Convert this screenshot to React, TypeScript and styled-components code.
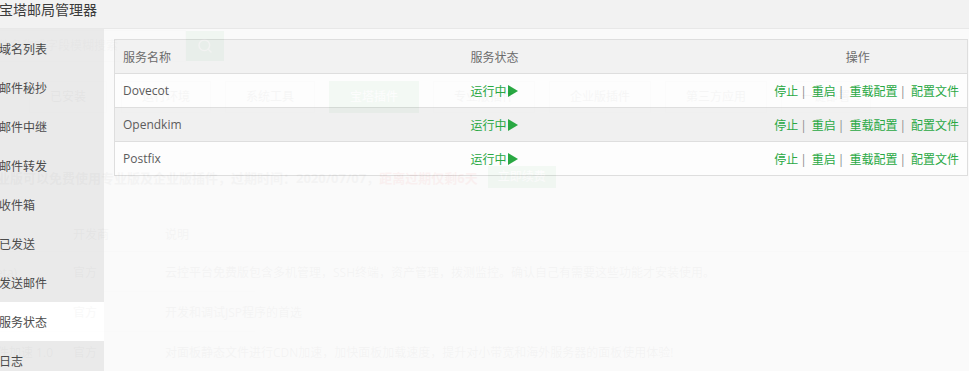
import React from "react";
import styled, { createGlobalStyle } from "styled-components";
import { Search } from "lucide-react";

const GlobalStyle = createGlobalStyle`
  html, body {
    margin: 0;
    padding: 0;
    background: #fff;
  }
  body {
    font-family: "Open Sans", "Noto Sans CJK SC", sans-serif;
    font-size: 12px;
    color: #555;
  }
`;

const Screen = styled.div`
  position: relative;
  width: 969px;
  height: 371px;
  overflow: hidden;
  background: #fff;
`;

/* ---------- page behind the layer ---------- */

const BgPage = styled.div`
  margin-left: -61px;
  padding-top: 30px;
  display: flex;
  flex-direction: column;
`;

const SearchRow = styled.div`
  display: flex;
  align-items: center;
  height: 32px;
`;

const SearchInput = styled.div`
  width: 235px;
  height: 30px;
  padding-left: 10px;
  border: 1px solid #ddd;
  line-height: 30px;
  color: #999;
  font-size: 12px;
`;

const SearchButton = styled.div`
  width: 38px;
  height: 30px;
  background: #20a53a;
  color: #fff;
  display: flex;
  align-items: center;
  justify-content: center;
`;

const TabRow = styled.div`
  display: flex;
  gap: 14px;
  margin-top: 19px;
  margin-left: 90px;
`;

const Tab = styled.div<{ $active?: boolean }>`
  height: 30px;
  line-height: 30px;
  padding: 0 20px;
  border: 1px solid ${(p) => (p.$active ? "#20a53a" : "#e4e4e4")};
  background: ${(p) => (p.$active ? "#20a53a" : "#fff")};
  color: ${(p) => (p.$active ? "#fff" : "#555")};
  font-size: 12px;
`;

const Notice = styled.div`
  margin-top: 52px;
  margin-left: 45px;
  height: 24px;
  display: flex;
  align-items: center;
  font-size: 13px;
  font-weight: bold;
  color: #666;
  white-space: nowrap;
`;

const NoticeRed = styled.span`
  color: #ef0808;
`;

const RenewButton = styled.span`
  margin-left: 10px;
  height: 22px;
  line-height: 22px;
  padding: 0 10px;
  background: #20a53a;
  color: #fff;
  font-size: 12px;
  font-weight: normal;
`;

const PluginTable = styled.table`
  margin-top: 28px;
  margin-left: -12px;
  width: 1100px;
  border-collapse: collapse;
  font-size: 12px;
  color: #666;
  th {
    text-align: left;
    font-weight: normal;
    height: 34px;
    padding: 0 10px;
    border-bottom: 1px solid #ddd;
  }
  td {
    height: 39px;
    padding: 0 10px;
    border-bottom: 1px solid #eee;
    white-space: nowrap;
  }
`;

/* ---------- the mail manager layer ---------- */

const Layer = styled.div`
  position: absolute;
  top: -12px;
  left: -21px;
  width: 999px;
  height: 400px;
  display: flex;
  flex-direction: column;
  opacity: 0.955;
  background: #fafafa;
`;

const LayerTitle = styled.div`
  height: 40px;
  line-height: 43px;
  padding-left: 20px;
  background: #f2f2f2;
  border-bottom: 1px solid #e8e8e8;
  font-size: 14px;
  color: #333;
`;

const LayerBody = styled.div`
  flex: 1;
  display: flex;
`;

const Menu = styled.ul`
  width: 125px;
  margin: 0;
  padding: 0;
  list-style: none;
  background: #eaeaea;
`;

const MenuItem = styled.li<{ $active?: boolean }>`
  height: 39px;
  line-height: 41px;
  padding-left: 20px;
  font-size: 12px;
  color: #444;
  background: ${(p) => (p.$active ? "#fff" : "transparent")};
`;

const Content = styled.div`
  flex: 1;
  padding: 10px;
`;

const ServiceTable = styled.table`
  width: 100%;
  border-collapse: collapse;
  border: 1px solid #ddd;
  font-size: 12px;
  color: #555;
  th {
    height: 33px;
    padding: 0 8px;
    background: #f2f2f2;
    font-weight: normal;
    color: #666;
    text-align: left;
    border-bottom: 1px solid #ddd;
  }
  th.ops {
    text-align: center;
  }
  td {
    height: 33px;
    padding: 0 8px;
    border-bottom: 1px solid #ddd;
  }
  tbody tr:nth-child(even) td {
    background: #f0f0f0;
  }
  tbody tr:nth-child(odd) td {
    background: #fdfdfd;
  }
`;

const StatusCell = styled.td`
  color: #20a53a;
  white-space: nowrap;
`;

const PlayIcon = styled.svg`
  width: 10px;
  height: 12px;
  margin-left: 1px;
  vertical-align: -1px;
`;

const OpsCell = styled.td`
  text-align: right;
  white-space: nowrap;
  color: #999;
`;

const OpLink = styled.a`
  color: #20a53a;
  text-decoration: none;
`;

const Pipe = styled.span`
  margin: 0 5px 0 2px;
  color: #888;
`;

const menu = [
  "域名列表",
  "邮件秘抄",
  "邮件中继",
  "邮件转发",
  "收件箱",
  "已发送",
  "发送邮件",
  "服务状态",
  "日志",
];

const services = ["Dovecot", "Opendkim", "Postfix"];
const ops = ["停止", "重启", "重载配置", "配置文件"];

const tabs = ["已安装", "运行环境", "系统工具", "宝塔插件", "专业版插件", "企业版插件", "第三方应用", "一键部署"];

const plugins = [
  { name: "云控平台(beta)", desc: "云控平台免费版包含多机管理，SSH终端，资产管理，拨测监控。确认自己有需要这些功能才安装使用。" },
  { name: "Tomcat", desc: "开发和调试JSP程序的首选" },
  { name: "面板静态文件加速 1.0", desc: "对面板静态文件进行CDN加速，加快面板加载速度，提升对小带宽和海外服务器的面板使用体验!" },
  { name: "", desc: "" },
];

const App: React.FC = () => {
  return (
    <Screen>
      <GlobalStyle />
      <BgPage>
        <SearchRow>
          <SearchInput>请输入插件名称或字段模糊搜索</SearchInput>
          <SearchButton>
            <Search size={16} strokeWidth={2} />
          </SearchButton>
        </SearchRow>
        <TabRow>
          {tabs.map((t) => (
            <Tab key={t} $active={t === "宝塔插件"}>
              {t}
            </Tab>
          ))}
        </TabRow>
        <Notice>
          专业版可以免费使用专业版及企业版插件，过期时间：2020/07/07，
          <NoticeRed>距离过期仅剩6天</NoticeRed>
          <RenewButton>立即续费</RenewButton>
        </Notice>
        <PluginTable>
          <colgroup>
            <col style={{ width: 133 }} />
            <col style={{ width: 92 }} />
            <col />
          </colgroup>
          <thead>
            <tr>
              <th>软件名称</th>
              <th>开发商</th>
              <th>说明</th>
            </tr>
          </thead>
          <tbody>
            {plugins.map((p, i) => (
              <tr key={i}>
                <td>{p.name}</td>
                <td>{p.desc ? "官方" : ""}</td>
                <td>{p.desc}</td>
              </tr>
            ))}
          </tbody>
        </PluginTable>
      </BgPage>

      <Layer>
        <LayerTitle>宝塔邮局管理器</LayerTitle>
        <LayerBody>
          <Menu>
            {menu.map((m) => (
              <MenuItem key={m} $active={m === "服务状态"}>
                {m}
              </MenuItem>
            ))}
          </Menu>
          <Content>
            <ServiceTable>
              <colgroup>
                <col style={{ width: 348 }} />
                <col style={{ width: 286 }} />
                <col />
              </colgroup>
              <thead>
                <tr>
                  <th>服务名称</th>
                  <th>服务状态</th>
                  <th className="ops">操作</th>
                </tr>
              </thead>
              <tbody>
                {services.map((s) => (
                  <tr key={s}>
                    <td>{s}</td>
                    <StatusCell>
                      运行中
                      <PlayIcon viewBox="0 0 10 12">
                        <path d="M0 0 L10 6 L0 12 Z" fill="#20a53a" />
                      </PlayIcon>
                    </StatusCell>
                    <OpsCell>
                      {ops.map((o, i) => (
                        <React.Fragment key={o}>
                          <OpLink href="#">{o}</OpLink>
                          {i < ops.length - 1 && <Pipe>|</Pipe>}
                        </React.Fragment>
                      ))}
                    </OpsCell>
                  </tr>
                ))}
              </tbody>
            </ServiceTable>
          </Content>
        </LayerBody>
      </Layer>
    </Screen>
  );
};

export default App;
